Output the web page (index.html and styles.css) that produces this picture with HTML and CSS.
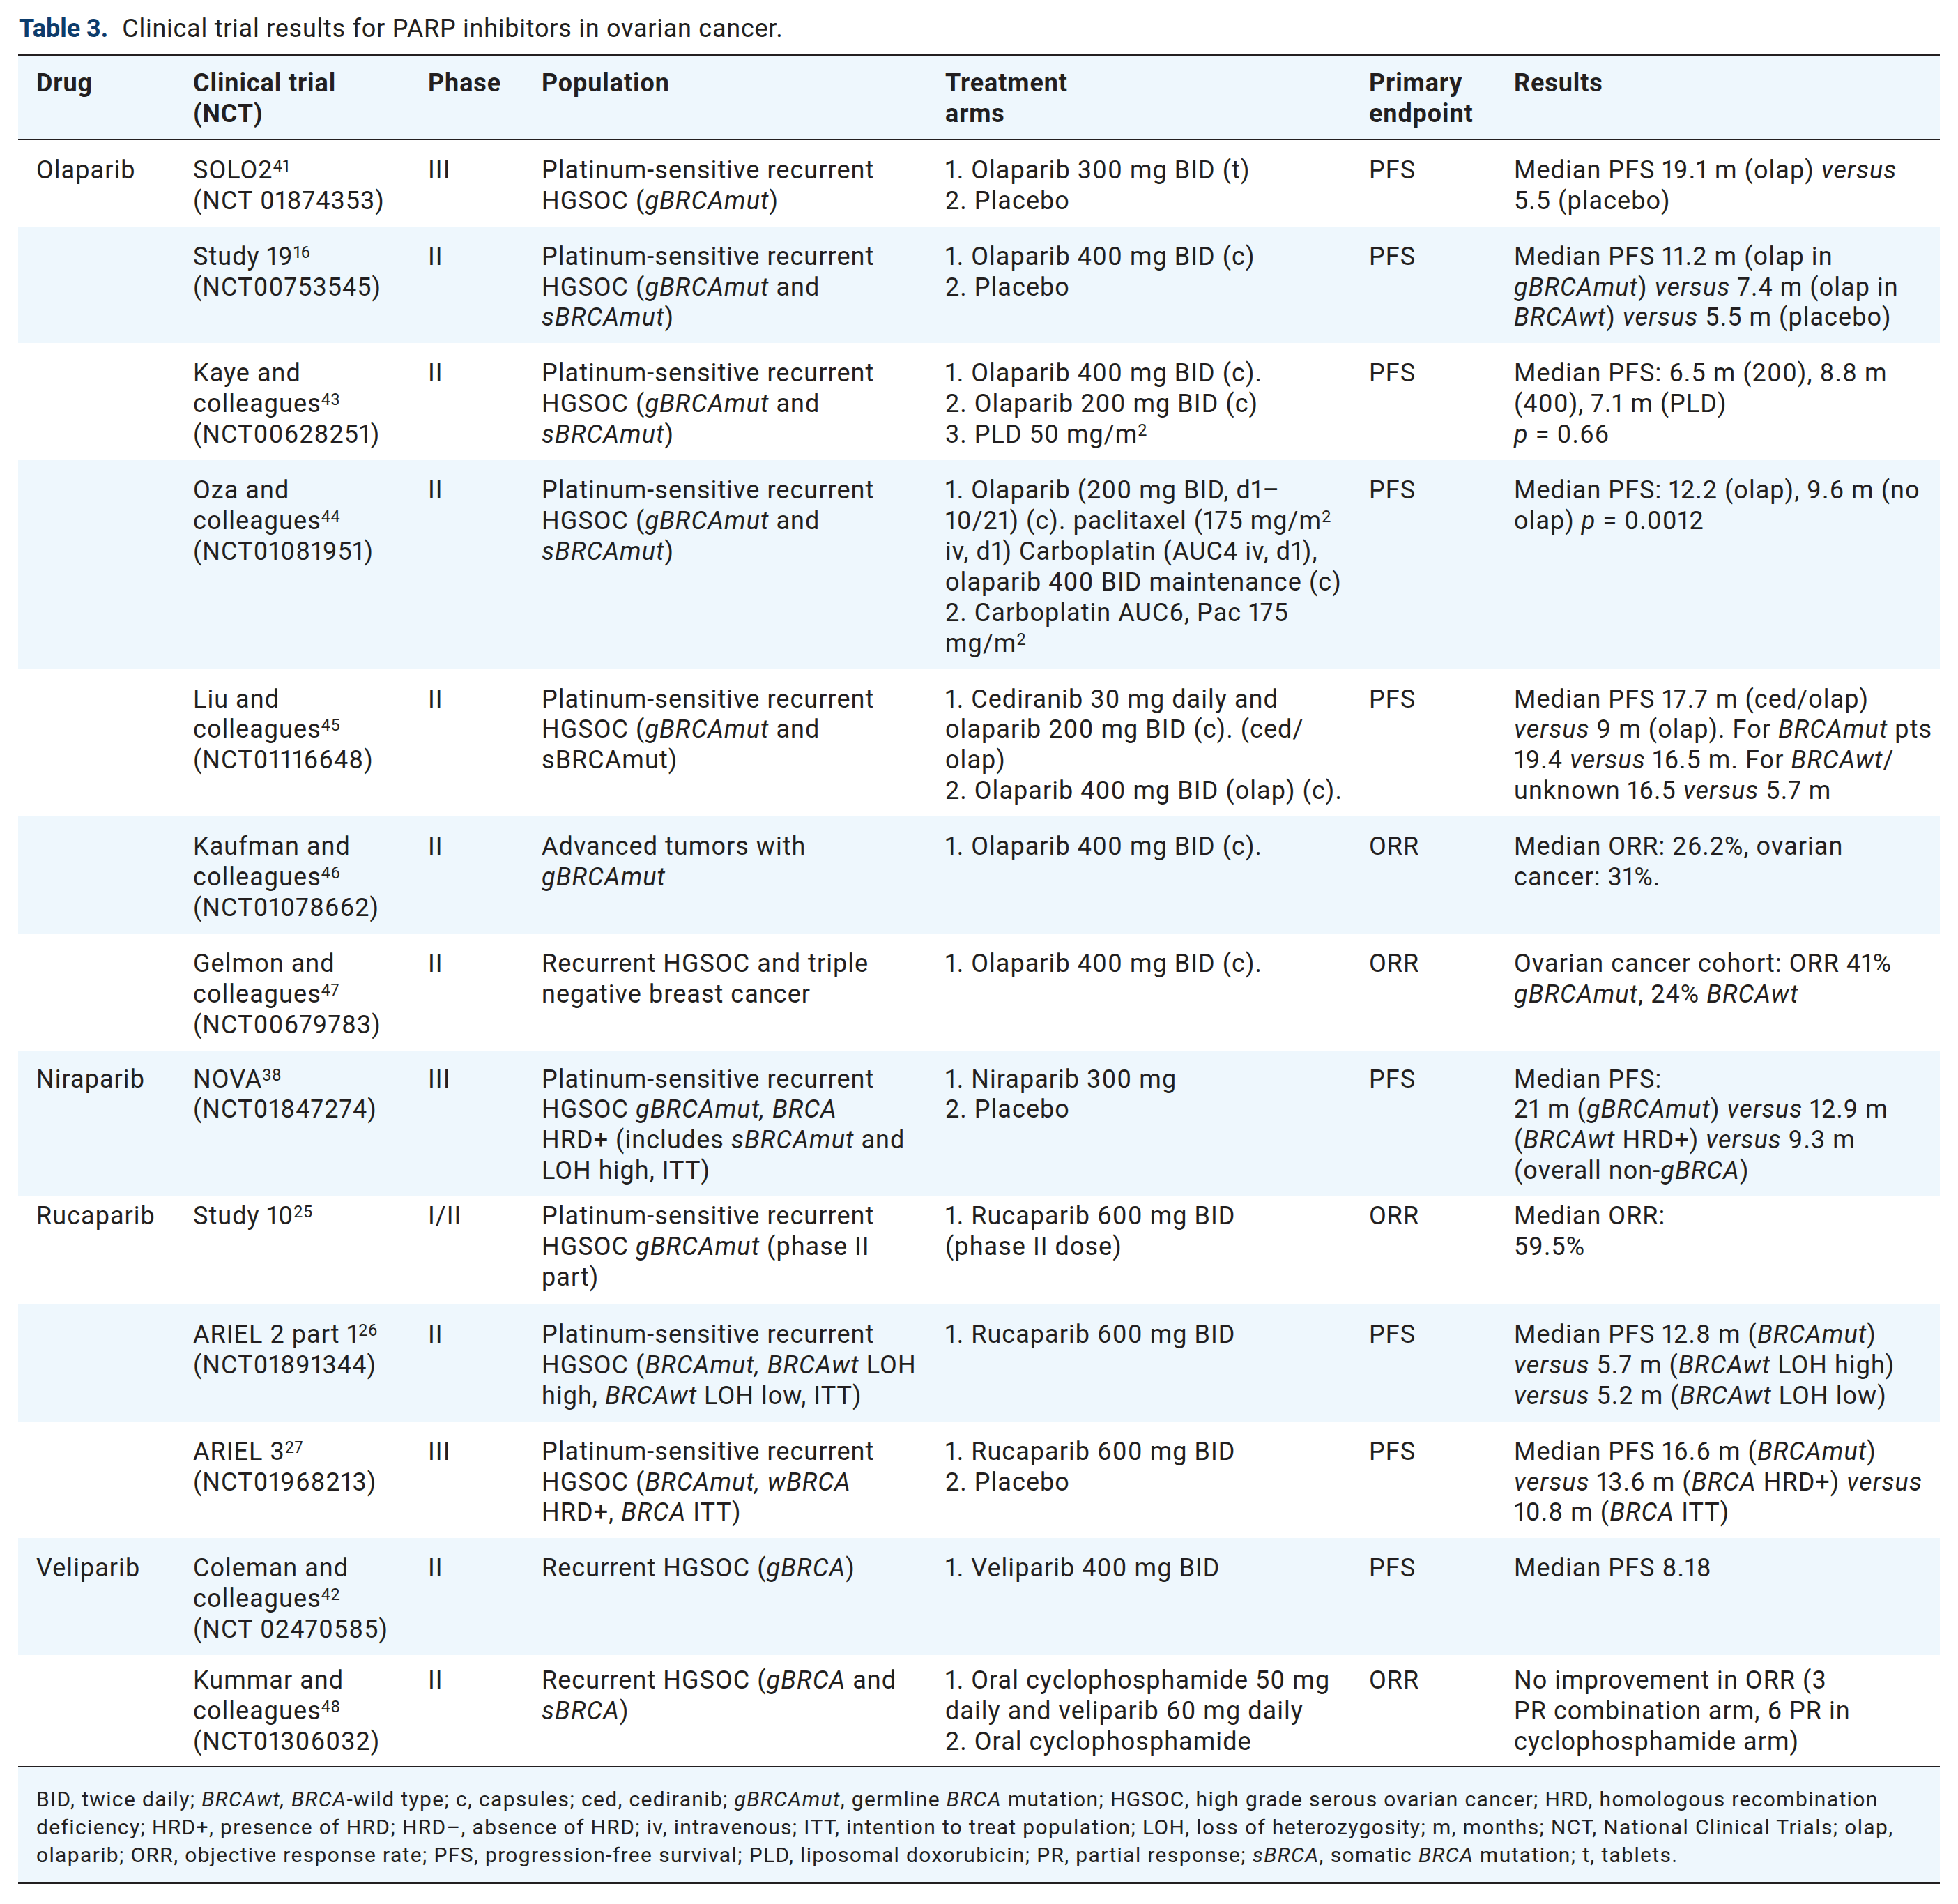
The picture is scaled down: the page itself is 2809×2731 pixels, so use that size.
FILE: index.html
```html
<!DOCTYPE html>
<html lang="en">
<head>
<meta charset="utf-8">
<title>Table 3. Clinical trial results for PARP inhibitors in ovarian cancer.</title>
<link rel="stylesheet" href="styles.css">
</head>
<body>
<div class="page">
  <p class="caption"><span class="caption-label">Table 3.</span>Clinical trial results for PARP inhibitors in ovarian cancer.</p>
  <table class="trials">
    <colgroup>
      <col class="c-drug">
      <col class="c-trial">
      <col class="c-phase">
      <col class="c-pop">
      <col class="c-arms">
      <col class="c-end">
      <col class="c-res">
    </colgroup>
    <thead>
      <tr>
        <th>Drug</th>
        <th>Clinical trial<br>(NCT)</th>
        <th>Phase</th>
        <th>Population</th>
        <th>Treatment<br>arms</th>
        <th>Primary<br>endpoint</th>
        <th>Results</th>
      </tr>
    </thead>
    <tbody>
      <tr>
        <td>Olaparib</td>
        <td>SOLO2<sup>41</sup><br>(NCT 01874353)</td>
        <td>III</td>
        <td>Platinum-sensitive recurrent<br>HGSOC (<i>gBRCAmut</i>)</td>
        <td>1. Olaparib 300 mg BID (t)<br>2. Placebo</td>
        <td>PFS</td>
        <td>Median PFS 19.1 m (olap) <i>versus</i><br>5.5 (placebo)</td>
      </tr>
      <tr>
        <td></td>
        <td>Study 19<sup>16</sup><br>(NCT00753545)</td>
        <td>II</td>
        <td>Platinum-sensitive recurrent<br>HGSOC (<i>gBRCAmut</i> and<br><i>sBRCAmut</i>)</td>
        <td>1. Olaparib 400 mg BID (c)<br>2. Placebo</td>
        <td>PFS</td>
        <td>Median PFS 11.2 m (olap in<br><i>gBRCAmut</i>) <i>versus</i> 7.4 m (olap in<br><i>BRCAwt</i>) <i>versus</i> 5.5 m (placebo)</td>
      </tr>
      <tr>
        <td></td>
        <td>Kaye and<br>colleagues<sup>43</sup><br>(NCT00628251)</td>
        <td>II</td>
        <td>Platinum-sensitive recurrent<br>HGSOC (<i>gBRCAmut</i> and<br><i>sBRCAmut</i>)</td>
        <td>1. Olaparib 400 mg BID (c).<br>2. Olaparib 200 mg BID (c)<br>3. PLD 50 mg/m<sup>2</sup></td>
        <td>PFS</td>
        <td>Median PFS: 6.5 m (200), 8.8 m<br>(400), 7.1 m (PLD)<br><i>p</i> = 0.66</td>
      </tr>
      <tr>
        <td></td>
        <td>Oza and<br>colleagues<sup>44</sup><br>(NCT01081951)</td>
        <td>II</td>
        <td>Platinum-sensitive recurrent<br>HGSOC (<i>gBRCAmut</i> and<br><i>sBRCAmut</i>)</td>
        <td>1. Olaparib (200 mg BID, d1–<br>10/21) (c). paclitaxel (175 mg/m<sup>2</sup><br>iv, d1) Carboplatin (AUC4 iv, d1),<br>olaparib 400 BID maintenance (c)<br>2. Carboplatin AUC6, Pac 175<br>mg/m<sup>2</sup></td>
        <td>PFS</td>
        <td>Median PFS: 12.2 (olap), 9.6 m (no<br>olap) <i>p</i> = 0.0012</td>
      </tr>
      <tr>
        <td></td>
        <td>Liu and<br>colleagues<sup>45</sup><br>(NCT01116648)</td>
        <td>II</td>
        <td>Platinum-sensitive recurrent<br>HGSOC (<i>gBRCAmut</i> and<br>sBRCAmut)</td>
        <td>1. Cediranib 30 mg daily and<br>olaparib 200 mg BID (c). (ced/<br>olap)<br>2. Olaparib 400 mg BID (olap) (c).</td>
        <td>PFS</td>
        <td>Median PFS 17.7 m (ced/olap)<br><i>versus</i> 9 m (olap). For <i>BRCAmut</i> pts<br>19.4 <i>versus</i> 16.5 m. For <i>BRCAwt</i>/<br>unknown 16.5 <i>versus</i> 5.7 m</td>
      </tr>
      <tr>
        <td></td>
        <td>Kaufman and<br>colleagues<sup>46</sup><br>(NCT01078662)</td>
        <td>II</td>
        <td>Advanced tumors with<br><i>gBRCAmut</i></td>
        <td>1. Olaparib 400 mg BID (c).</td>
        <td>ORR</td>
        <td>Median ORR: 26.2%, ovarian<br>cancer: 31%.</td>
      </tr>
      <tr>
        <td></td>
        <td>Gelmon and<br>colleagues<sup>47</sup><br>(NCT00679783)</td>
        <td>II</td>
        <td>Recurrent HGSOC and triple<br>negative breast cancer</td>
        <td>1. Olaparib 400 mg BID (c).</td>
        <td>ORR</td>
        <td>Ovarian cancer cohort: ORR 41%<br><i>gBRCAmut</i>, 24% <i>BRCAwt</i></td>
      </tr>
      <tr class="row-snug">
        <td>Niraparib</td>
        <td>NOVA<sup>38</sup><br>(NCT01847274)</td>
        <td>III</td>
        <td>Platinum-sensitive recurrent<br>HGSOC <i>gBRCAmut, BRCA</i><br>HRD+ (includes <i>sBRCAmut</i> and<br>LOH high, ITT)</td>
        <td>1. Niraparib 300 mg<br>2. Placebo</td>
        <td>PFS</td>
        <td>Median PFS:<br>21 m (<i>gBRCAmut</i>) <i>versus</i> 12.9 m<br>(<i>BRCAwt</i> HRD+) <i>versus</i> 9.3 m<br>(overall non-<i>gBRCA</i>)</td>
      </tr>
      <tr class="row-tight">
        <td>Rucaparib</td>
        <td>Study 10<sup>25</sup></td>
        <td>I/II</td>
        <td>Platinum-sensitive recurrent<br>HGSOC <i>gBRCAmut</i> (phase II<br>part)</td>
        <td>1. Rucaparib 600 mg BID<br>(phase II dose)</td>
        <td>ORR</td>
        <td>Median ORR:<br>59.5%</td>
      </tr>
      <tr>
        <td></td>
        <td>ARIEL 2 part 1<sup>26</sup><br>(NCT01891344)</td>
        <td>II</td>
        <td>Platinum-sensitive recurrent<br>HGSOC (<i>BRCAmut, BRCAwt</i> LOH<br>high, <i>BRCAwt</i> LOH low, ITT)</td>
        <td>1. Rucaparib 600 mg BID</td>
        <td>PFS</td>
        <td>Median PFS 12.8 m (<i>BRCAmut</i>)<br><i>versus</i> 5.7 m (<i>BRCAwt</i> LOH high)<br><i>versus</i> 5.2 m (<i>BRCAwt</i> LOH low)</td>
      </tr>
      <tr>
        <td></td>
        <td>ARIEL 3<sup>27</sup><br>(NCT01968213)</td>
        <td>III</td>
        <td>Platinum-sensitive recurrent<br>HGSOC (<i>BRCAmut, wBRCA</i><br>HRD+, <i>BRCA</i> ITT)</td>
        <td>1. Rucaparib 600 mg BID<br>2. Placebo</td>
        <td>PFS</td>
        <td>Median PFS 16.6 m (<i>BRCAmut</i>)<br><i>versus</i> 13.6 m (<i>BRCA</i> HRD+) <i>versus</i><br>10.8 m (<i>BRCA</i> ITT)</td>
      </tr>
      <tr>
        <td>Veliparib</td>
        <td>Coleman and<br>colleagues<sup>42</sup><br>(NCT 02470585)</td>
        <td>II</td>
        <td>Recurrent HGSOC (<i>gBRCA</i>)</td>
        <td>1. Veliparib 400 mg BID</td>
        <td>PFS</td>
        <td>Median PFS 8.18</td>
      </tr>
      <tr class="row-last">
        <td></td>
        <td>Kummar and<br>colleagues<sup>48</sup><br>(NCT01306032)</td>
        <td>II</td>
        <td>Recurrent HGSOC (<i>gBRCA</i> and<br><i>sBRCA</i>)</td>
        <td>1. Oral cyclophosphamide 50 mg<br>daily and veliparib 60 mg daily<br>2. Oral cyclophosphamide</td>
        <td>ORR</td>
        <td>No improvement in ORR (3<br>PR combination arm, 6 PR in<br>cyclophosphamide arm)</td>
      </tr>
    </tbody>
  </table>
  <div class="notes">BID, twice daily; <i>BRCAwt, BRCA</i>-wild type; c, capsules; ced, cediranib; <i>gBRCAmut</i>, germline <i>BRCA</i> mutation; HGSOC, high grade serous ovarian cancer; HRD, homologous recombination<br>deficiency; HRD+, presence of HRD; HRD–, absence of HRD; iv, intravenous; ITT, intention to treat population; LOH, loss of heterozygosity; m, months; NCT, National Clinical Trials; olap,<br>olaparib; ORR, objective response rate; PFS, progression-free survival; PLD, liposomal doxorubicin; PR, partial response; <i>sBRCA</i>, somatic <i>BRCA</i> mutation; t, tablets.</div>
</div>
</body>
</html>
```

FILE: styles.css
```css
* {
  box-sizing: border-box;
}

html, body {
  margin: 0;
  padding: 0;
  background: #ffffff;
}

body {
  color: #231f20;
  font-family: Roboto, "Liberation Sans", "DejaVu Sans", sans-serif;
  font-variant-numeric: proportional-nums;
}

.page {
  width: 2809px;
  padding: 19px 26px 0 26px;
}

.caption {
  margin: 0 0 15px 1px;
  font-size: 36px;
  line-height: 44px;
  white-space: nowrap;
  color: #231f20;
  letter-spacing: 0.75px;
}

.caption-label {
  font-weight: 700;
  color: #0d3c6b;
  margin-right: 20px;
  letter-spacing: 0;
}

.trials {
  width: 2757px;
  table-layout: fixed;
  border-collapse: separate;
  border-spacing: 0;
  font-size: 36px;
  line-height: 43.9px;
  letter-spacing: 1.05px;
}

.c-drug { width: 225px; }
.c-trial { width: 337px; }
.c-phase { width: 163px; }
.c-pop { width: 579px; }
.c-arms { width: 608px; }
.c-end { width: 208px; }
.c-res { width: 637px; }

.trials th,
.trials td {
  text-align: left;
  vertical-align: top;
  white-space: nowrap;
  padding: 22px 0 14px 26px;
}

.trials thead tr {
  background: #eef7fd;
}

.trials th {
  font-weight: 700;
  letter-spacing: 0.9px;
  padding: 18px 0 13px 26px;
  border-top: 2px solid #231f20;
  border-bottom: 2px solid #231f20;
}

.trials tbody tr:nth-child(even) {
  background: #eef7fd;
}

.trials tbody tr.row-snug td {
  padding-top: 20px;
  padding-bottom: 13px;
}

.trials tbody tr.row-tight td {
  padding-top: 8px;
  padding-bottom: 16px;
}

.trials tbody tr.row-last td {
  padding-top: 15px;
  padding-bottom: 12px;
  border-bottom: 2px solid #231f20;
}

.trials sup {
  font-size: 0.65em;
  line-height: 0;
  vertical-align: 10px;
  letter-spacing: 0.5px;
}

.trials i,
.notes i {
  font-style: italic;
}

.notes {
  width: 2757px;
  background: #eef7fd;
  border-bottom: 2px solid #231f20;
  padding: 26px 0 19px 26px;
  font-size: 30px;
  line-height: 40px;
  letter-spacing: 1.35px;
  white-space: nowrap;
}
```
